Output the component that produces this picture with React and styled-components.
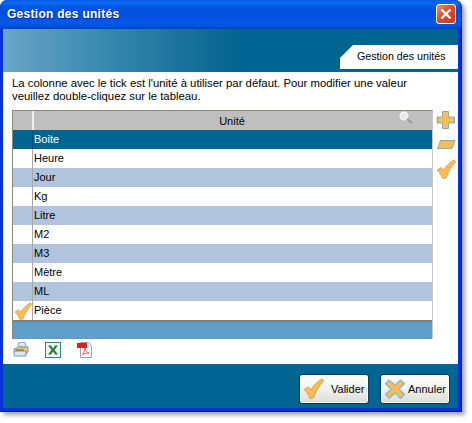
import React from "react";
import styled, { createGlobalStyle } from "styled-components";

const Global = createGlobalStyle`
  html, body { margin: 0; padding: 0; background: #fff; }
  body { font-family: "Liberation Sans", Arial, sans-serif; }
`;
const Page = styled.div`width: 472px; height: 423px; overflow: hidden;`;
const Win = styled.div`
  width: 462px; height: 412px; box-sizing: border-box; display: flex; flex-direction: column;
  border-radius: 7px 7px 0 0; background: #0831d9;
  box-shadow: 3px 3px 4px rgba(90,90,90,.55);
  border-right: 1px solid #001ea0; border-bottom: 1px solid #001ea0;
`;
const TitleBar = styled.div`
  height: 29px; flex: none; display: flex; align-items: center; justify-content: space-between;
  padding: 0 5px 2px 7px; box-sizing: border-box; border-radius: 7px 7px 0 0;
  background: linear-gradient(180deg,#0a5be0 0,#0a6bf4 3px,#0358e4 6px,#0250dc 12px,#0457e8 22px,#0254e2 26px,#0240b8 29px);
`;
const Title = styled.div`
  color: #fff; font: bold 12px "Liberation Sans", sans-serif; letter-spacing: .28px;
  text-shadow: 1px 1px 0 #0a2c90;
`;
const CloseBtn = styled.div`
  width: 20px; height: 20px; box-sizing: border-box; border: 1px solid #fff; border-radius: 3px;
  background: linear-gradient(135deg,#eb8f70,#d9502a 45%,#c23a12);
  display: flex; align-items: center; justify-content: center;
`;
const Inner = styled.div`flex: 1; display: flex; flex-direction: column; margin: 0 3px 3px 3px; min-height: 0;`;
const Band = styled.div`
  height: 43px; flex: none; display: flex; align-items: flex-end; justify-content: flex-end; box-sizing: border-box;
  padding-bottom: 3px;
  background: linear-gradient(90deg,#6aa5c8 0,#3e8cb2 90px,#156f98 190px,#006590 240px,#006590 100%);
`;
const Tab = styled.div`
  width: 118px; height: 24px; box-sizing: border-box; background: #fff; color: #000; font-size: 10.7px;
  padding: 5px 0 0 17px; white-space: nowrap;
  clip-path: polygon(13px 0, 100% 0, 100% 100%, 0 100%, 0 13px);
`;
const Content = styled.div`
  flex: 1; background: #fff; display: flex; flex-direction: column; padding: 4px 0 0 9px; min-height: 0;
`;
const Intro = styled.p`margin: 0; font-size: 11.35px; line-height: 13px; color: #000; width: 425px; height: 33px; padding-top: 1px;`;
const Main = styled.div`display: flex; align-items: flex-start; gap: 3px;`;
const Grid = styled.div`
  width: 421px; height: 229px; box-sizing: border-box; border: 1px solid #8a8a80; border-bottom: none; border-right: 1px solid #c8c8c8;
  display: flex; flex-direction: column; background: #fff;
`;
const Head = styled.div`display: flex; height: 19px; background: #bfbfbf; flex: none;`;
const HeadMark = styled.div`width: 19px; border-right: 1px solid #eee;`;
const HeadCell = styled.div`
  flex: 1; position: relative; display: flex; align-items: center; justify-content: center; font-size: 11px; padding-right: 2px; border-left: 1px solid #eee;
`;
const SearchIcon = styled.svg`position: absolute; right: 18px; top: 0;`;
const Row = styled.div`
  display: flex; height: 19px; flex: none; font-size: 11px; color: ${p => p.$sel ? "#fff" : "#000"};
  background: ${p => p.$sel ? "#006590" : p.$alt ? "#b0c4de" : "#fff"};
`;
const Mark = styled.div`width: 19px; flex: none; border-right: 1px solid ${p => p.$sel ? "#004f70" : "#a8a8a8"}; display:flex; align-items:center; justify-content:center;`;
const Cell = styled.div`flex: 1; padding: 3px 0 0 1px; box-sizing: border-box; white-space: nowrap;`;
const GridFoot = styled.div`flex: 1; background: #5f9ec9; border-top: 2px solid #80807a;`;
const Tools = styled.div`display: flex; flex-direction: column; gap: 9px; width: 20px;`;
const Exports = styled.div`display: flex; gap: 16px; padding: 3px 0 0 1px; align-items: center;`;
const Footer = styled.div`
  height: 44px; flex: none; background: #006590; display: flex; justify-content: flex-end; align-items: center; gap: 11px; padding: 5px 8px 0 0; box-sizing: border-box;
`;
const Btn = styled.div`
  height: 30px; width: 70px; box-sizing: border-box; border: 1px solid #003f6a; border-radius: 3px;
  background: linear-gradient(180deg,#fff 0,#f3f3f1 45%,#dcdcd8 100%); display: flex; align-items: center;
  padding-left: 3px; font-size: 11px; color: #000;
  box-shadow: inset 0 0 0 1px rgba(255,255,255,.7);
`;
const BtnLabel = styled.span`margin-left: ${p => p.$ml}px;`;

const ORANGE = "#f6bd55", EDGE = "#6fa0b0";
const Plus = () => (
  <svg width="20" height="20" viewBox="0 0 20 20"><path d="M6.500 1.500h6v5.500h6v6h-6v5.500h-6V13H1V7h5.500z" fill={ORANGE} stroke={EDGE} strokeWidth=".8" strokeLinejoin="round" /></svg>
);
const Minus = () => (
  <svg width="20" height="11" viewBox="0 0 20 11"><path d="M4.500 1.500H19L16 9.500H1.500z" fill={ORANGE} stroke={EDGE} strokeWidth=".8" /></svg>
);
const Tick = ({ s = 20 }) => (
  <svg width={s} height={s} viewBox="0 0 20 20"><path d="M1 11 L5 8.500 L7.500 11 C10 7 14 3 18.500 .8 L19.500 3 C16 7 12.500 12 10 19 L6.500 19.500 C5.500 16 3.500 13.500 1 11z" fill={ORANGE} stroke="#c89a40" strokeWidth=".7" strokeLinejoin="round" /></svg>
);
const Cross = () => (
  <svg width="22" height="22" viewBox="0 0 22 22"><path d="M5 2 L11 7 L16.500 2 L20.500 5.500 L15 11 L20.500 16.500 L16.500 20.500 L11 15 L5 20.500 L1.500 16.500 L7 11 L1.500 5.500z" fill={ORANGE} stroke="#7dbad8" strokeWidth="1.100" strokeLinejoin="round" /></svg>
);
const Printer = () => (
  <svg width="16" height="16" viewBox="0 0 16 16">
    <path d="M5 1l7-1 1 5H6z" fill="#dfe8f0" stroke="#5a8cb0" strokeWidth=".7" />
    <path d="M1 7l5-2h9v5l-2 2H2z" fill="#f0c878" stroke="#4d86ad" strokeWidth=".8" />
    <path d="M1 9h12v5H2a1 1 0 0 1-1-1z" fill="#dbe6ee" stroke="#4d86ad" strokeWidth=".8" />
    <path d="M3 8h8" stroke="#7a5a20" strokeWidth="1" />
  </svg>
);
const Excel = () => (
  <svg width="16" height="16" viewBox="0 0 16 16">
    <rect x=".5" y=".5" width="15" height="15" fill="#eef4ee" stroke="#2e7f9f" />
    <path d="M3 3.500h3l2 3 2-3h3l-3.400 4.500L13 12.500h-3l-2-3-2 3H3l3.400-4.500z" fill="#2f7d3a" />
  </svg>
);
const Pdf = () => (
  <svg width="15" height="16" viewBox="0 0 15 16">
    <path d="M3.500.5h8l3 3v12h-11z" fill="#fff" stroke="#9aa4b4" />
    <rect x="0" y="1" width="10" height="5" fill="#d8202a" />
    <path d="M5 13c2-2 3-5 3-7 .5 3 2 4.500 4 5-2.500 0-5 .7-7 2z" fill="none" stroke="#e0505a" strokeWidth=".9" />
  </svg>
);

const units = ["Boite", "Heure", "Jour", "Kg", "Litre", "M2", "M3", "Mètre", "ML", "Pièce"];

export default function App() {
  return (
    <Page>
      <Global />
      <Win>
        <TitleBar>
          <Title>Gestion des unités</Title>
          <CloseBtn>
            <svg width="12" height="12" viewBox="0 0 12 12"><path d="M1.500 1.500l9 9M10.500 1.500l-9 9" stroke="#fff" strokeWidth="2.400" /></svg>
          </CloseBtn>
        </TitleBar>
        <Inner>
          <Band><Tab>Gestion des unités</Tab></Band>
          <Content>
            <Intro>La colonne avec le tick est l'unité à utiliser par défaut. Pour modifier une valeur veuillez double-cliquez sur le tableau.</Intro>
            <Main>
              <Grid>
                <Head>
                  <HeadMark />
                  <HeadCell>
                    Unité
                    <SearchIcon width="16" height="13" viewBox="0 0 16 13">
                      <circle cx="6" cy="5" r="3.800" fill="#e8e8e8" stroke="#f4f4f4" strokeWidth="1.500" />
                      <path d="M9 8l5 4" stroke="#999" strokeWidth="2.200" />
                    </SearchIcon>
                  </HeadCell>
                </Head>
                {units.map((u, i) => (
                  <Row key={u} $sel={i === 0} $alt={i % 2 === 0}>
                    <Mark $sel={i === 0}>{u === "Pièce" && <Tick s={18} />}</Mark>
                    <Cell>{u}</Cell>
                  </Row>
                ))}
                <GridFoot />
              </Grid>
              <Tools>
                <Plus />
                <Minus />
                <Tick />
              </Tools>
            </Main>
            <Exports><Printer /><Excel /><Pdf /></Exports>
          </Content>
          <Footer>
            <Btn><Tick s={21} /><BtnLabel $ml={7}>Valider</BtnLabel></Btn>
            <Btn><Cross /><BtnLabel $ml={2}>Annuler</BtnLabel></Btn>
          </Footer>
        </Inner>
      </Win>
    </Page>
  );
}
